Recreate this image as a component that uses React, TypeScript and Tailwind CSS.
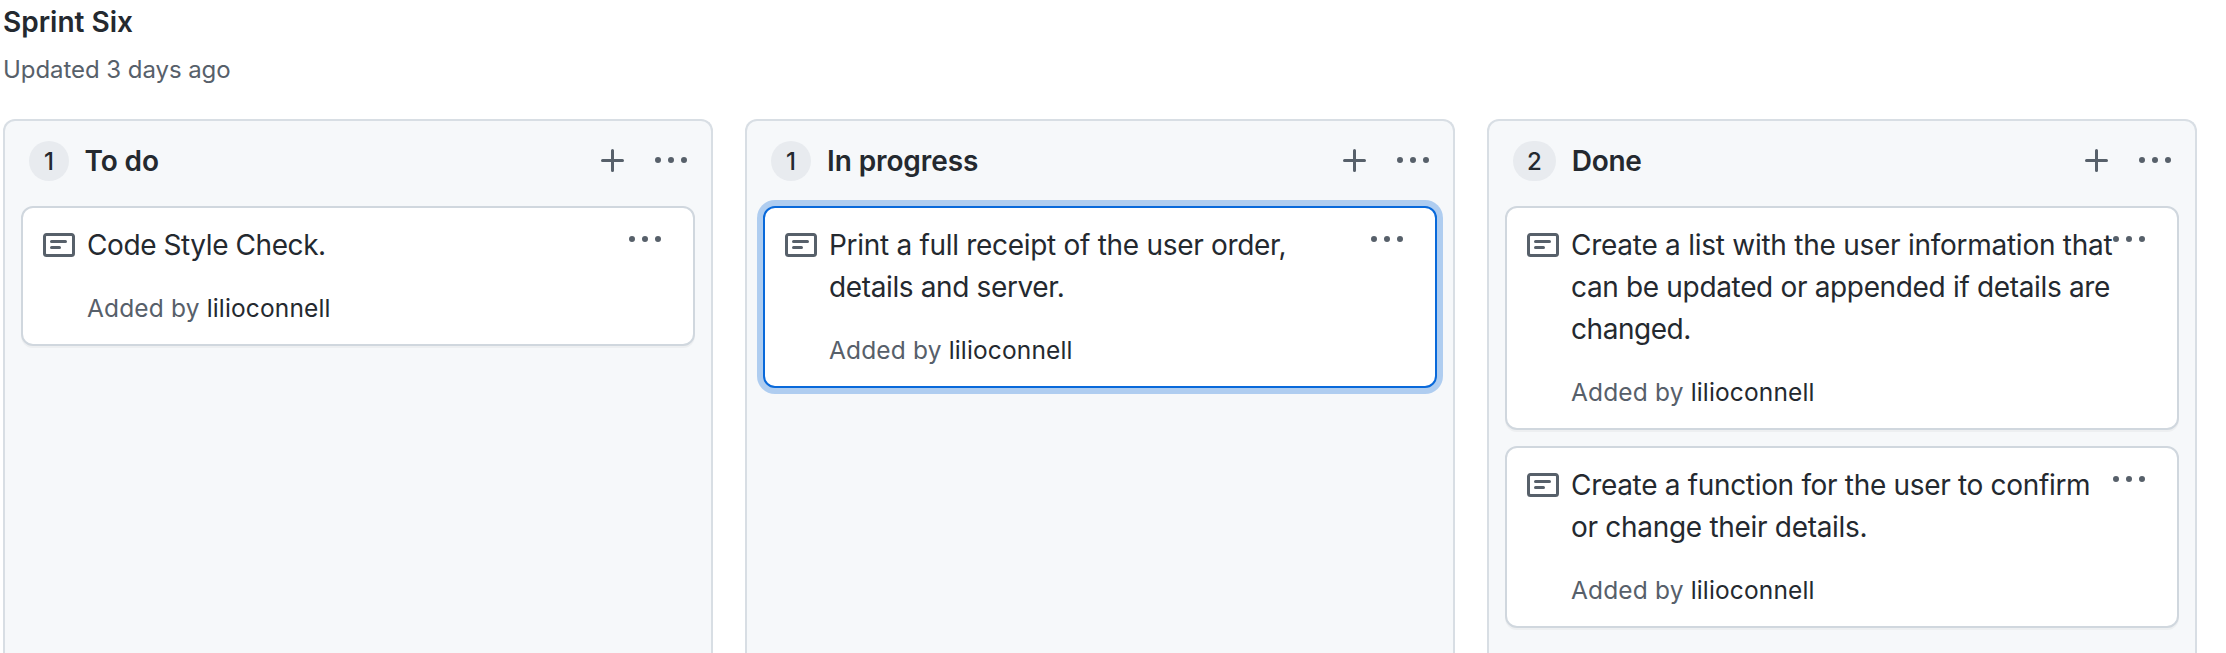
import React from "react";

type Line = { text: string; tracking: string };
type Note = { lines: Line[]; author: string; focused?: boolean };
type Column = { title: string; tracking: string; notes: Note[] };

const columns: Column[] = [
  {
    title: "To do",
    tracking: "ml-[15.5px] tracking-[-0.1px]",
    notes: [
      { lines: [{ text: "Code Style Check.", tracking: "tracking-[-0.42px]" }], author: "lilioconnell" },
    ],
  },
  {
    title: "In progress",
    tracking: "ml-4 tracking-[-0.1px]",
    notes: [
      {
        lines: [
          { text: "Print a full receipt of the user order,", tracking: "tracking-[-0.3px]" },
          { text: "details and server.", tracking: "tracking-[-0.37px]" },
        ],
        author: "lilioconnell",
        focused: true,
      },
    ],
  },
  {
    title: "Done",
    tracking: "ml-4 tracking-[-0.3px]",
    notes: [
      {
        lines: [
          { text: "Create a list with the user information that", tracking: "tracking-[-0.26px]" },
          { text: "can be updated or appended if details are", tracking: "tracking-[-0.34px]" },
          { text: "changed.", tracking: "tracking-[-0.45px]" },
        ],
        author: "lilioconnell",
      },
      {
        lines: [
          { text: "Create a function for the user to confirm", tracking: "tracking-[-0.32px]" },
          { text: "or change their details.", tracking: "tracking-[-0.3px]" },
        ],
        author: "lilioconnell",
      },
    ],
  },
];

function Icon({ d }: { d: string }) {
  return (
    <svg className="block size-8 shrink-0 fill-[#57606a]" viewBox="0 0 16 16" aria-hidden="true">
      <path fillRule="evenodd" d={d} />
    </svg>
  );
}

const notePath =
  "M0 3.75C0 2.784.784 2 1.75 2h12.5c.966 0 1.75.784 1.75 1.75v8.5A1.75 1.75 0 0114.25 14H1.75A1.75 1.75 0 010 12.25v-8.5zm1.75-.25a.25.25 0 00-.25.25v8.5c0 .138.112.25.25.25h12.5a.25.25 0 00.25-.25v-8.5a.25.25 0 00-.25-.25H1.75zM3.5 6.25a.75.75 0 01.75-.75h7a.75.75 0 010 1.5h-7a.75.75 0 01-.75-.75zm.75 2.25a.75.75 0 000 1.5h4a.75.75 0 000-1.5h-4z";
const plusPath =
  "M7.75 2a.75.75 0 01.75.75V7h4.25a.75.75 0 110 1.5H8.5v4.25a.75.75 0 11-1.5 0V8.5H2.75a.75.75 0 010-1.5H7V2.75A.75.75 0 017.75 2z";
const dotsPath =
  "M8 9a1.5 1.5 0 100-3 1.5 1.5 0 000 3zM1.5 9a1.5 1.5 0 100-3 1.5 1.5 0 000 3zm13 0a1.5 1.5 0 100-3 1.5 1.5 0 000 3z";

function NoteCard({ note }: { note: Note }) {
  return (
    <article
      className={
        note.focused
          ? "relative flex rounded-xl border-2 border-[#0969da] bg-white pt-4 pr-4 pb-[18px] pl-5 shadow-[0_0_0_6px_rgba(9,105,218,0.3)]"
          : "relative flex rounded-xl border-2 border-[#d0d7de] bg-white pt-4 pr-4 pb-[18px] pl-5 shadow-[0_2px_0_rgba(27,31,36,0.04)]"
      }
    >
      <div className="pt-[5px]">
        <Icon d={notePath} />
      </div>
      <div className="ml-3 whitespace-nowrap">
        <p className="text-[28px] leading-[42px]">
          {note.lines.map((line) => (
            <span key={line.text} className={`block ${line.tracking}`}>
              {line.text}
            </span>
          ))}
        </p>
        <p className="mt-6 text-[24.5px] leading-9 tracking-[0.15px] text-[#57606a]">
          Added by <a className="text-[#24292f]">{note.author}</a>
        </p>
      </div>
      <button className="absolute top-4 right-8" aria-label="Card menu">
        <Icon d={dotsPath} />
      </button>
    </article>
  );
}

function BoardColumn({ column }: { column: Column }) {
  return (
    <section className="w-[710px] shrink-0 rounded-t-xl border-2 border-b-0 border-[#d8dee4] bg-[#f6f8fa]">
      <header className="flex h-[85px] items-start pt-5 pr-6 pl-6">
        <span className="flex h-10 min-w-10 items-center justify-center rounded-full bg-[#e8ebef] px-3.5 pt-px text-2xl leading-9 font-medium">
          {column.notes.length}
        </span>
        <h3 className={`-mt-px text-[28px] leading-[42px] font-semibold ${column.tracking}`}>
          {column.title}
        </h3>
        <div className="mt-1 ml-auto flex gap-[26px]">
          <Icon d={plusPath} />
          <Icon d={dotsPath} />
        </div>
      </header>
      <div className="flex flex-col gap-4 px-4">
        {column.notes.map((note) => (
          <NoteCard key={note.lines[0].text} note={note} />
        ))}
      </div>
    </section>
  );
}

export default function App() {
  return (
    <main className="flex h-[653px] flex-col overflow-hidden bg-white font-['Inter',sans-serif] text-[#24292f]">
      <div className="h-[119px] shrink-0 pt-px pl-[3px]">
        <h2 className="text-[28px] leading-[42px] font-semibold">Sprint Six</h2>
        <p className="mt-[9px] text-2xl leading-9 tracking-[-0.06px] text-[#57606a]">Updated 3 days ago</p>
      </div>
      <div className="flex grow gap-8 pl-[3px]">
        {columns.map((column) => (
          <BoardColumn key={column.title} column={column} />
        ))}
      </div>
    </main>
  );
}
